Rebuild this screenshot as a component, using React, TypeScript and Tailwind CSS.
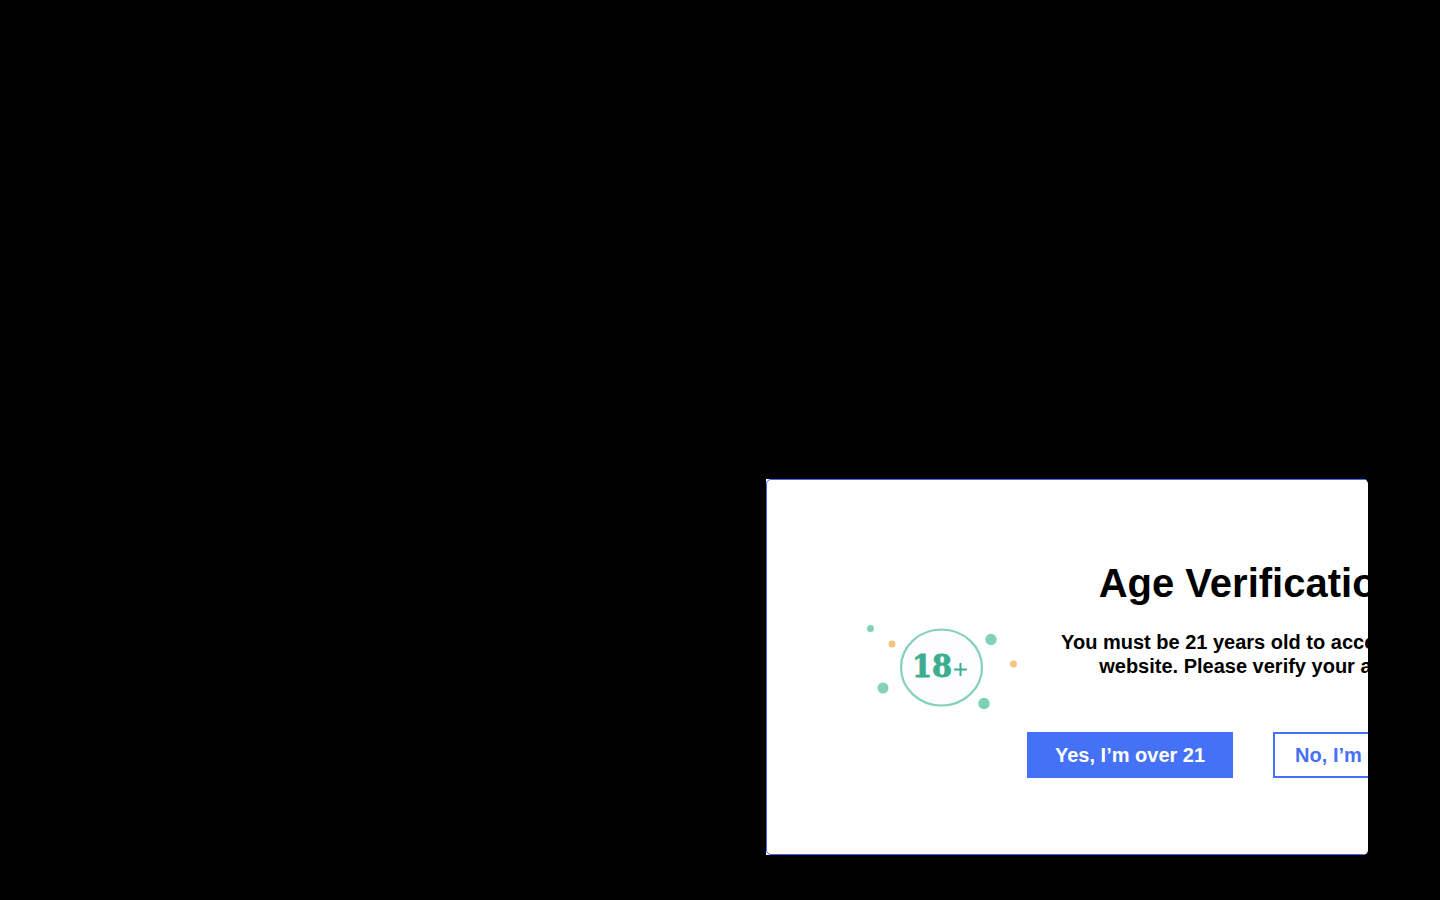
function AgeBadge() {
  return (
    <svg
      viewBox="0 2 160 96"
      className="h-24 w-40 shrink-0"
      role="img"
      aria-label="18+"
    >
      <ellipse cx="79.5" cy="48.5" rx="40.5" ry="38" fill="#fdfdff" stroke="#84d1bb" strokeWidth="2.2" />
      <circle cx="8.5" cy="9.5" r="3.5" fill="#84d1bb" />
      <circle cx="30" cy="25" r="3.5" fill="#f6c47e" />
      <circle cx="21" cy="69" r="5.5" fill="#84d1bb" />
      <circle cx="129" cy="20.5" r="5.7" fill="#84d1bb" />
      <circle cx="151.5" cy="45" r="3.5" fill="#f6c47e" />
      <circle cx="122" cy="84.5" r="5.7" fill="#7bd2b7" />
      <text
        x="50"
        y="58"
        fill="#3aae90"
        stroke="#3aae90"
        strokeWidth="0.8"
        fontSize="32"
        fontWeight="700"
        fontFamily="'DejaVu Serif Condensed', 'DejaVu Serif', serif"
      >
        18
      </text>
      <path d="M92 50.5h13M98.5 44v13" stroke="#3aae90" strokeWidth="2" />
    </svg>
  );
}

export default function App() {
  return (
    <main className="flex min-h-screen items-end justify-end bg-black pr-[5%] pb-[45px] font-['Liberation_Sans',Arial,sans-serif]">
      <div
        role="dialog"
        aria-labelledby="age-title"
        className="w-full max-w-[602px] overflow-hidden rounded-r-[5px] bg-white"
      >
        {/* the panel is wider than the dialog and gets cut off on the right */}
        <div className="flex w-max items-center gap-[5px] rounded-[5px] border border-[#4466f5] pt-20 pr-24 pb-[76px] pl-[95px]">
          <AgeBadge />

          <div className="flex flex-col items-center text-center font-bold text-black">
            <h1 id="age-title" className="text-[40px] leading-[46px]">
              Age Verification
            </h1>
            <p className="mt-6 text-xl leading-6">
              You must be 21 years old to access this
              <br />
              website. Please verify your age.
            </p>
            <div className="mt-[54px] flex gap-10 text-xl leading-6">
              <button
                type="button"
                className="border-2 border-[#4471f5] bg-[#4471f5] px-[26px] py-[9px] text-white"
              >
                Yes, I’m over 21
              </button>
              <button
                type="button"
                className="border-2 border-[#4471f5] bg-white px-5 py-[9px] text-[#4471f5]"
              >
                No, I’m under 21
              </button>
            </div>
          </div>
        </div>
      </div>
    </main>
  );
}
